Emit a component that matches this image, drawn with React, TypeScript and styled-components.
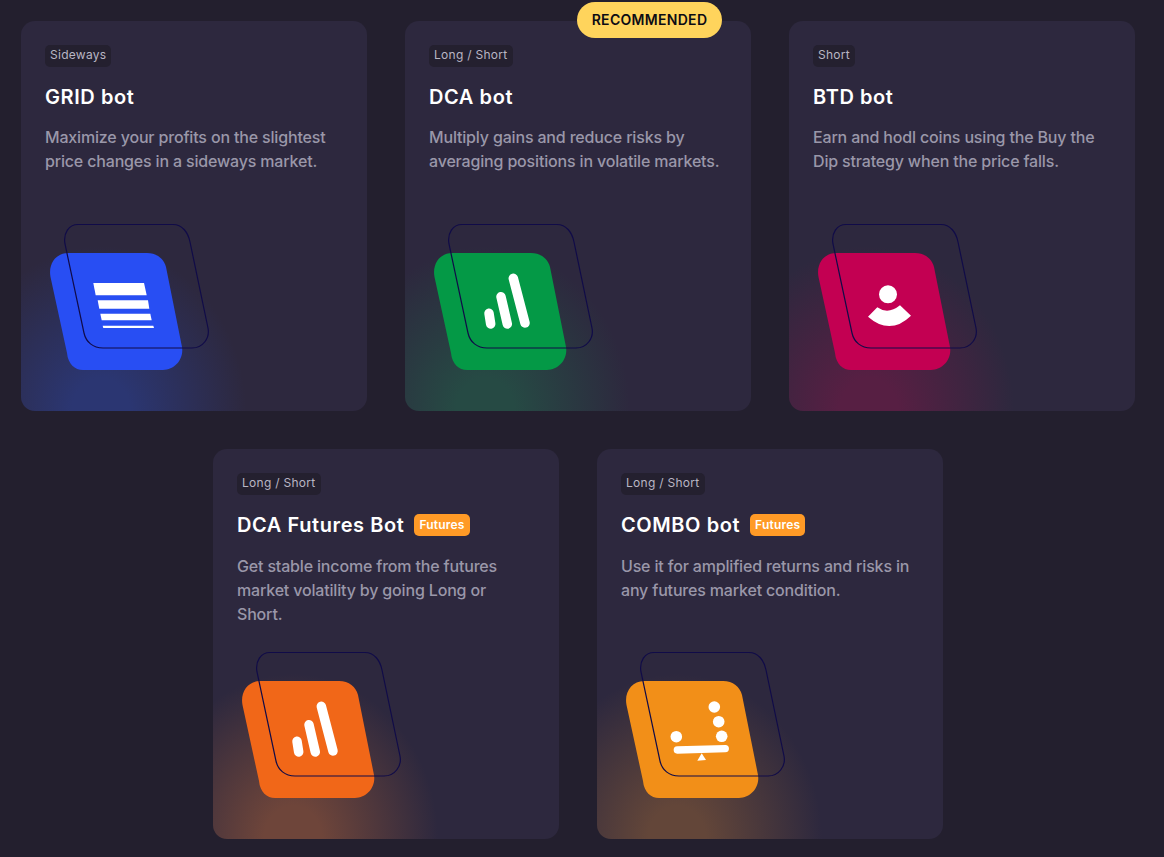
import React from "react";
import styled, { createGlobalStyle } from "styled-components";

const GlobalStyle = createGlobalStyle`
  html, body {
    margin: 0;
    padding: 0;
    background: #231f2e;
  }
  body {
    font-family: Inter, "Noto Sans", sans-serif;
  }
`;

const Page = styled.div`
  width: 1156px;
  box-sizing: border-box;
  padding: 21px 0 18px;
  display: flex;
  flex-wrap: wrap;
  justify-content: center;
  gap: 38px;
`;

const Card = styled.div<{ $glow: string }>`
  position: relative;
  width: 346px;
  height: 390px;
  box-sizing: border-box;
  padding: 24px;
  display: flex;
  flex-direction: column;
  align-items: flex-start;
  border-radius: 14px;
  background:
    radial-gradient(ellipse 145px 165px at 80px 100%, ${(p) => p.$glow} 20%, transparent),
    #2d283e;
`;

const Pill = styled.div`
  position: absolute;
  top: -19px;
  left: 172px;
  width: 145px;
  height: 36px;
  display: flex;
  align-items: center;
  justify-content: center;
  border-radius: 18px;
  background: #ffd45c;
  color: #0d0b14;
  font-size: 14px;
  font-weight: 600;
  line-height: 20px;
  letter-spacing: 0.3px;
`;

const Tag = styled.span`
  height: 22px;
  padding: 0 5px 2px;
  box-sizing: border-box;
  display: flex;
  align-items: center;
  border-radius: 5px;
  background: #24202f;
  color: #b9b6c4;
  font-size: 12px;
  line-height: 16px;
  letter-spacing: 0.28px;
`;

const TitleRow = styled.div<{ $futures?: boolean }>`
  margin-top: 16px;
  min-height: ${(p) => (p.$futures ? "29px" : "28px")};
  display: flex;
  align-items: flex-start;
  gap: 10px;
`;

const Title = styled.h3`
  margin: 0;
  color: #fff;
  font-size: 20px;
  font-weight: 600;
  line-height: 28px;
  letter-spacing: 0.58px;
`;

const FuturesBadge = styled.span`
  height: 22px;
  margin-top: 3px;
  padding: 0 5px 1px;
  box-sizing: border-box;
  display: flex;
  align-items: center;
  border-radius: 5px;
  background: #ff9a26;
  color: #fff;
  font-size: 12px;
  font-weight: 600;
  letter-spacing: 0.2px;
`;

const Description = styled.p`
  margin: 14px 0 0;
  color: #9a97a9;
  font-size: 16px;
  font-weight: 450;
  line-height: 24px;
  letter-spacing: -0.17px;
`;

const Art = styled.svg`
  display: block;
  margin: auto 0 16px 5px;
  overflow: visible;
`;

const GridGlyph = () => (
  <g fill="#fff">
    <polygon points="43.3,59 94,59 96.7,71.3 45.7,71.3" />
    <polygon points="47.7,76.3 98,76.3 99.3,84.7 49.3,84.7" />
    <polygon points="50.3,89.7 100.3,89.7 101.7,96.3 51.7,96.3" />
    <polygon points="52.7,101.7 103.3,101.7 104,104 53.3,104" />
  </g>
);

const BarsGlyph = () => (
  <g stroke="#fff" strokeWidth="9.5" strokeLinecap="round">
    <line x1="55" y1="89.3" x2="56.7" y2="100" />
    <line x1="67" y1="72.7" x2="73.3" y2="100" />
    <line x1="79.3" y1="54.3" x2="91" y2="99" />
  </g>
);

const PersonGlyph = () => (
  <g fill="#fff">
    <circle cx="70" cy="70.3" r="9" />
    <path d="M50 92.7 59.3 83.3Q70 91 82 81.3L93 91.7Q72 112 50 92.7Z" />
  </g>
);

const BalanceGlyph = () => (
  <g fill="#fff">
    <circle cx="88.3" cy="55" r="5.8" />
    <circle cx="92.7" cy="69.7" r="5.8" />
    <circle cx="95.7" cy="84.3" r="5.8" />
    <circle cx="50.3" cy="84.7" r="5.8" />
    <line x1="51.3" y1="98" x2="99.3" y2="96.7" stroke="#fff" strokeWidth="7.3" strokeLinecap="round" />
    <polygon points="75.7,101.3 71.3,108.7 80,108" />
  </g>
);

const BotArt = ({ color, children }: { color: string; children: React.ReactNode }) => (
  <Art width="160" height="147" viewBox="0 0 160 147" fill="none">
    <path
      d="M18 29H97C107 29 114 35 116 43L132 123C134 135 125 146 113 146H33C25 146 18 140 17 129L.5 53C-2 40 6 29 18 29Z"
      fill={color}
    />
    {children}
    <path
      d="M28 .5H123C132 .5 138 8 140 18L158 104C160 114 153 124 142 124H53C43 124 36 118 34 109L15 20C13 9 19 .5 28 .5Z"
      stroke="#100b48"
      strokeWidth="1.2"
    />
  </Art>
);

const bots = [
  {
    tag: "Sideways",
    title: "GRID bot",
    text: "Maximize your profits on the slightest price changes in a sideways market.",
    color: "#284ef3",
    glow: "#2b3672",
    glyph: <GridGlyph />,
  },
  {
    tag: "Long / Short",
    title: "DCA bot",
    text: "Multiply gains and reduce risks by averaging positions in volatile markets.",
    color: "#049946",
    glow: "#264a44",
    glyph: <BarsGlyph />,
    recommended: true,
  },
  {
    tag: "Short",
    title: "BTD bot",
    text: "Earn and hodl coins using the Buy the Dip strategy when the price falls.",
    color: "#c30052",
    glow: "#571f43",
    glyph: <PersonGlyph />,
  },
  {
    tag: "Long / Short",
    title: "DCA Futures Bot",
    text: "Get stable income from the futures market volatility by going Long or Short.",
    color: "#f16718",
    glow: "#6e453a",
    glyph: <BarsGlyph />,
    futures: true,
  },
  {
    tag: "Long / Short",
    title: "COMBO bot",
    text: "Use it for amplified returns and risks in any futures market condition.",
    color: "#f28f18",
    glow: "#634639",
    glyph: <BalanceGlyph />,
    futures: true,
  },
];

export default function App() {
  return (
    <>
      <GlobalStyle />
      <Page>
        {bots.map((bot) => (
          <Card key={bot.title} $glow={bot.glow}>
            {bot.recommended && <Pill>RECOMMENDED</Pill>}
            <Tag>{bot.tag}</Tag>
            <TitleRow $futures={bot.futures}>
              <Title>{bot.title}</Title>
              {bot.futures && <FuturesBadge>Futures</FuturesBadge>}
            </TitleRow>
            <Description>{bot.text}</Description>
            <BotArt color={bot.color}>{bot.glyph}</BotArt>
          </Card>
        ))}
      </Page>
    </>
  );
}
